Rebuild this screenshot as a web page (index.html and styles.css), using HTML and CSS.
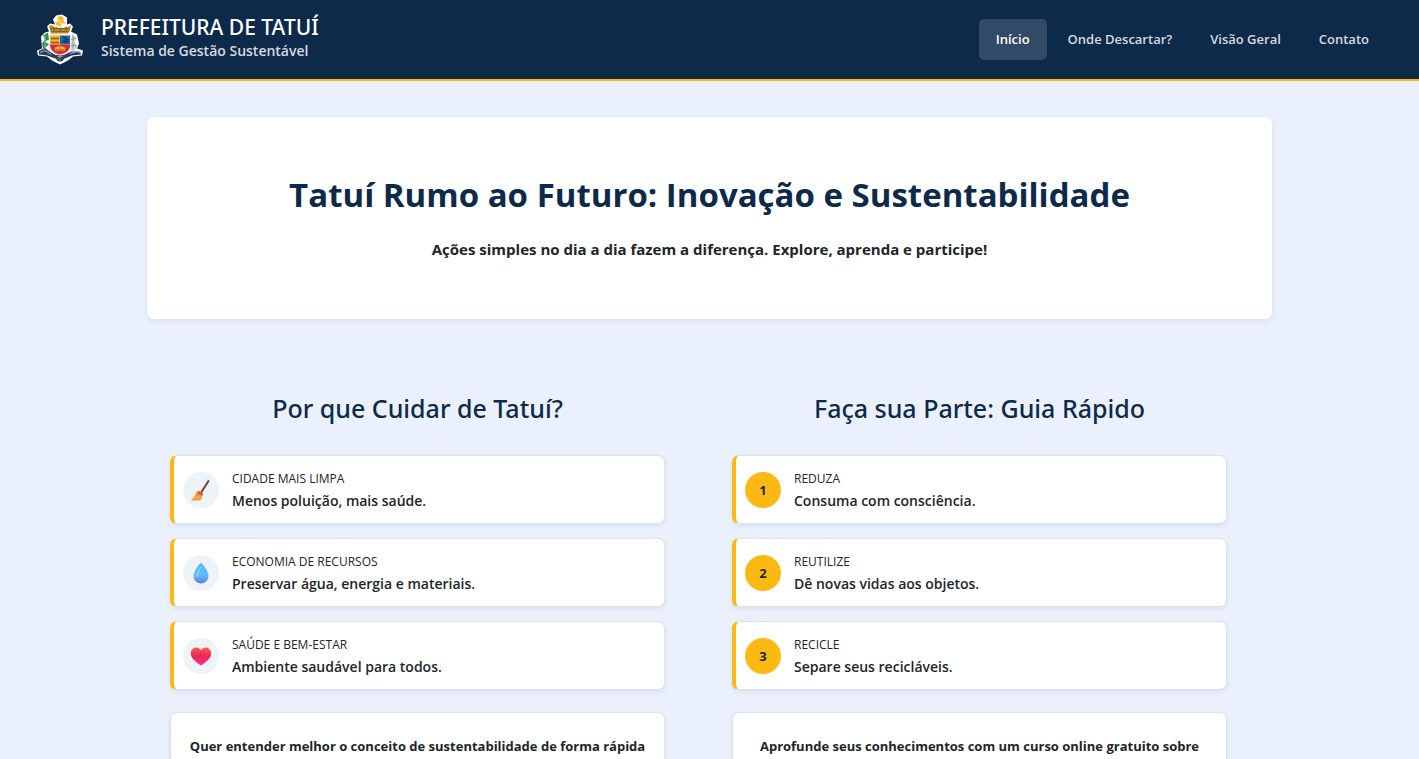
FILE: index.html
```html
<!DOCTYPE html>
<html lang="pt-BR">
<head>
<meta charset="utf-8">
<meta name="viewport" content="width=device-width, initial-scale=1">
<title>Prefeitura de Tatuí</title>
<link rel="stylesheet" href="styles.css">
</head>
<body>
<header class="topbar">
  <div class="brand">
    <svg class="crest" viewBox="0 0 46 50" aria-hidden="true">
      <path d="M19 1 25 0 30 3 30 10 33 9 36 12 34 17 40 20 42 29 40 34 46 36 45 41 36 42 31 46 23 50 15 46 10 42 1 41 0 36 5 34 4 22 8 18 12 17 10 12 13 9 18 10 16 5Z" fill="#fff"/>
      <path d="M20 3 24 1 27 4 26 6 29 9 25 9 24 12 20 11 18 8 21 7Z" fill="#f4b52f"/>
      <path d="M20 4 23 5 21 7 25 8 22 10" fill="none" stroke="#fbdf73"/>
      <path d="M12 11h4l1 2 3-1 1 2 4-1 1 1 3-2 1 1 4-2-1 5-2 3H14Z" fill="#b68a24"/>
      <path d="M13 14h19M14 17h18M17 13v4M23 13v4M29 13v4" stroke="#795c18" stroke-width=".8"/>
      <path d="M6 21 11 18 12 25 8 27 12 30 8 33 12 37 6 34 5 29 8 25Z" fill="#278b57"/>
      <path d="M8 20v15" stroke="#a5bc75"/>
      <path d="M35 19 39 23 38 28 41 32 37 37 33 35 34 29Z" fill="#cbd4d5"/>
      <path d="M36 21 36 34M34 25 39 24M34 31 39 31" stroke="#7d918a" stroke-width=".8"/>
      <path d="M2 36 8 34 14 38 20 41 26 41 34 37 43 37 44 40 35 41 28 44 18 44 10 41 2 40Z" fill="#263d6d"/>
      <path d="M3 38 8 36 14 40M33 39 40 37 43 38" fill="none" stroke="#b9b8a7"/>
      <circle cx="23" cy="43" r="4" fill="#29364b"/>
      <path d="M20 42h6M23 39v8M20 45l6-5" stroke="#9fadb5" stroke-width=".7"/>
      <path d="M12 20H34V31C34 37 29 40 23 41 16 40 12 37 12 31Z" fill="#f1eadd"/>
      <path d="M13 21H23V30H13Z" fill="#f2b936"/>
      <path d="M23 21H33V30H23Z" fill="#176db1"/>
      <path d="M13 30H33V32C32 37 28 39 23 40 17 39 14 36 13 31Z" fill="#dc2837"/>
      <path d="M14 24h8M14 28h8" stroke="#9e622c" stroke-width="2"/>
      <path d="M26 23h3v2h3M25 27h7M28 24v5" fill="none" stroke="#183858" stroke-width="1.3"/>
      <path d="M18 36V33l3-1 2-1 2 1 3 1v3Z" fill="#f4b72d"/>
      <path d="M19 35h8M23 31v4" stroke="#a65b23" stroke-width=".7"/>
    </svg>
    <div>
      <p class="brand-name">PREFEITURA DE TATUÍ</p>
      <p class="brand-sub">Sistema de Gestão Sustentável</p>
    </div>
  </div>
  <nav class="menu" aria-label="Principal">
    <a class="menu-link active" href="#inicio">Início</a>
    <a class="menu-link" href="#descartar">Onde Descartar?</a>
    <a class="menu-link" href="#geral">Visão Geral</a>
    <a class="menu-link" href="#contato">Contato</a>
  </nav>
</header>
<main class="page" id="inicio">
  <section class="hero">
    <h1 class="hero-title">Tatuí Rumo ao Futuro: Inovação e Sustentabilidade</h1>
    <p class="hero-text">Ações simples no dia a dia fazem a diferença. Explore, aprenda e participe!</p>
  </section>
  <div class="columns">
    <section class="column">
      <h2 class="column-title">Por que Cuidar de Tatuí?</h2>
      <ul class="cards">
        <li class="card">
          <span class="badge"><svg class="emoji" viewBox="0 0 22 22" aria-hidden="true">
            <path d="M18.5 2 11.5 13" stroke="#6b4044" stroke-width="2" stroke-linecap="round"/>
            <path d="M8 11.500 13 15 11 21Q5 22 1 21Q5 18 6 14Z" fill="#f79643"/>
            <path d="M9 12 13 15 12 17 7 14Z" fill="#e65335"/>
            <path d="M4 20 8 17M7 20 10 17" stroke="#ffc05c"/>
          </svg></span>
          <div><h3 class="card-title">CIDADE MAIS LIMPA</h3><p class="card-text">Menos poluição, mais saúde.</p></div>
        </li>
        <li class="card">
          <span class="badge"><svg class="emoji" viewBox="0 0 22 22" aria-hidden="true">
            <defs><linearGradient id="water" x1="0" y1="0" x2="0" y2="1"><stop stop-color="#51baf0"/><stop offset=".6" stop-color="#62bdf8"/><stop offset="1" stop-color="#6574e5"/></linearGradient></defs>
            <path d="M11 1C10 1 3.5 9 3.5 14A7.5 7.5 0 0 0 18.500 14C18.500 9 12 1 11 1Z" fill="url(#water)"/>
            <path d="M11 5C9 8 7 11 7 14" stroke="#82e5ff" stroke-width="2" stroke-linecap="round" fill="none" opacity=".6"/>
          </svg></span>
          <div><h3 class="card-title">ECONOMIA DE RECURSOS</h3><p class="card-text">Preservar água, energia e materiais.</p></div>
        </li>
        <li class="card">
          <span class="badge"><svg class="emoji" viewBox="0 0 22 22" aria-hidden="true">
            <defs><linearGradient id="love" x1="0" y1="0" x2="0" y2="1"><stop stop-color="#ff5a55"/><stop offset=".5" stop-color="#ee2852"/><stop offset="1" stop-color="#f42aac"/></linearGradient></defs>
            <path d="M11 5C7 0 .8 3 .8 8.500C.8 13.500 6 17 11 20.500C16 17 21.200 13.500 21.200 8.500C21.200 3 15 0 11 5Z" fill="url(#love)"/>
            <path d="M11 6C10 9 10 11 11 13" stroke="#c9274d" fill="none" opacity=".6"/>
          </svg></span>
          <div><h3 class="card-title">SAÚDE E BEM-ESTAR</h3><p class="card-text">Ambiente saudável para todos.</p></div>
        </li>
      </ul>
      <div class="info"><p>Quer entender melhor o conceito de sustentabilidade de forma rápida</p></div>
    </section>
    <section class="column">
      <h2 class="column-title">Faça sua Parte: Guia Rápido</h2>
      <ol class="cards">
        <li class="card"><span class="badge number">1</span><div><h3 class="card-title">REDUZA</h3><p class="card-text">Consuma com consciência.</p></div></li>
        <li class="card"><span class="badge number">2</span><div><h3 class="card-title">REUTILIZE</h3><p class="card-text">Dê novas vidas aos objetos.</p></div></li>
        <li class="card"><span class="badge number">3</span><div><h3 class="card-title">RECICLE</h3><p class="card-text">Separe seus recicláveis.</p></div></li>
      </ol>
      <div class="info"><p>Aprofunde seus conhecimentos com um curso online gratuito sobre</p></div>
    </section>
  </div>
</main>
</body>
</html>
```
FILE: styles.css
```css
* { box-sizing: border-box; }
body, h1, h2, h3, p, ul, ol { margin: 0; padding: 0; }
body {
  display: flex;
  flex-direction: column;
  height: 100vh;
  background: #eaf1fd;
  color: #212529;
  font-family: "Segoe UI", "Open Sans", "Noto Sans", sans-serif;
}
.topbar {
  display: flex;
  flex-shrink: 0;
  align-items: center;
  justify-content: space-between;
  padding: 14px 33px 14px 37px;
  border-bottom: 2px solid #fdb913;
  background: #0e2a4a;
}
.brand { display: flex; align-items: flex-start; gap: 18px; }
.crest { width: 46px; height: 51px; }
.brand-name {
  color: #fff;
  font-family: "Segoe UI", "Noto Sans", sans-serif;
  font-size: 21px;
  font-weight: 500;
  line-height: 26px;
}
.brand-sub { color: #d6dbe0; font-size: 14px; font-weight: 600; line-height: 22px; }
.menu { display: flex; gap: 4px; }
.menu-link {
  padding: 10px 17px;
  border-radius: 5px;
  color: #d6dbe0;
  font-size: 13px;
  font-weight: 600;
  line-height: 21px;
  text-decoration: none;
}
.menu-link.active { background: #324a65; color: #fff; }
.page {
  flex: 1;
  min-height: 0;
  overflow-y: auto;
  scrollbar-width: none;
  padding: 36px 147px;
}
.hero {
  padding: 56px 24px 58px;
  border-radius: 7px;
  background: #fff;
  box-shadow: 0 2px 6px rgba(14, 42, 74, .08);
  text-align: center;
}
.hero-title { color: #0e2a4a; font-size: 33px; font-weight: 700; line-height: 44px; }
.hero-text { margin-top: 20px; font-size: 15px; font-weight: 700; line-height: 24px; }
.columns {
  display: grid;
  grid-template-columns: 1fr 1fr;
  gap: 67px;
  padding: 72px 45px 0 23px;
}
.column-title {
  color: #0e2a4a;
  font-family: "Segoe UI", "Noto Sans", sans-serif;
  font-size: 25px;
  font-weight: 500;
  line-height: 34px;
  text-align: center;
}
.cards { display: grid; gap: 14px; margin-top: 30px; list-style: none; }
.card {
  display: flex;
  align-items: center;
  gap: 13px;
  padding: 12px 9px 11px;
  border: 1px solid #dee2e6;
  border-left: 4px solid #fdb913;
  border-radius: 7px;
  background: #fff;
  box-shadow: 0 2px 5px rgba(14, 42, 74, .08);
}
.badge {
  display: flex;
  flex: none;
  align-items: center;
  justify-content: center;
  width: 36px;
  height: 36px;
  border-radius: 50%;
  background: #edf3f6;
  font-size: 13px;
  font-weight: 700;
}
.badge.number { background: #fdb913; }
.emoji { width: 22px; height: 22px; fill: none; }
.card-title { font-size: 12px; font-weight: 500; line-height: 22px; }
.card-text { font-size: 14px; font-weight: 600; line-height: 22px; }
.info {
  margin-top: 22px;
  padding: 22px 12px 24px;
  border: 1px solid #dee2e6;
  border-radius: 7px;
  background: #fff;
  box-shadow: 0 2px 5px rgba(14, 42, 74, .08);
  font-size: 13px;
  font-weight: 700;
  line-height: 22px;
  text-align: center;
}
```
